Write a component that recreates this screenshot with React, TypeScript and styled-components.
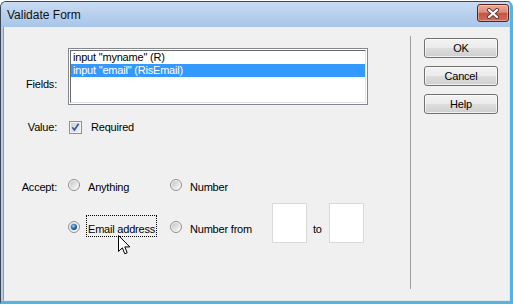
import React, { useId } from "react";
import styled, { createGlobalStyle } from "styled-components";

const GlobalStyle = createGlobalStyle`
  html, body { margin: 0; padding: 0; background: #ffffff; }
  body {
    font-family: "Liberation Sans", Arial, sans-serif;
    font-size: 11px;
    color: #000;
  }
  * { box-sizing: border-box; }
`;

const Window = styled.div`
  width: 513px;
  height: 303px;
  margin-top: 1px;
  display: flex;
  flex-direction: column;
  border-top: 1px solid #3c4654;
  border-left: 1px solid #3c4654;
  border-right: 3px solid #55b3df;
  border-bottom: 3px solid #55b3df;
  border-radius: 6px 6px 0 0;
  background: #b6cce8;
  overflow: hidden;
`;

const TitleBar = styled.div`
  height: 25px;
  flex: none;
  display: flex;
  justify-content: space-between;
  align-items: flex-start;
  padding: 0 1px 0 6px;
  background: linear-gradient(#c8dbf2, #a8c5e9);
`;

const TitleText = styled.div`
  margin-top: 5px;
  font-size: 12px;
  line-height: 16px;
  color: #111;
`;

const CloseButton = styled.div`
  width: 32px;
  height: 18px;
  margin-top: 2px;
  border: 1px solid #5a2219;
  border-radius: 3px;
  background: linear-gradient(#eaa899 0%, #de8b7a 45%, #c9533f 52%, #cf6c59 100%);
  box-shadow: inset 0 0 0 1px rgba(255, 255, 255, 0.35);
  display: flex;
  align-items: center;
  justify-content: center;
`;

const Panel = styled.div`
  flex: 1;
  display: flex;
  margin-left: 2px;
  background: #f0f0f0;
  border-left: 1px solid #8a99ab;
  border-right: 1px solid #dfe7ef;
  border-bottom: 1px solid #dfe7ef;
  letter-spacing: -0.2px;
`;

const LeftPane = styled.div`
  width: 406px;
  flex: none;
  padding-top: 21px;
  display: flex;
  flex-direction: column;
`;

const Separator = styled.div`
  width: 1px;
  flex: none;
  margin: 9px 0 11px;
  background: #a0a0a0;
`;

const RightPane = styled.div`
  flex: 1;
  padding: 11px 0 0 13px;
  display: flex;
  flex-direction: column;
  gap: 8px;
`;

const Button = styled.button`
  width: 74px;
  height: 20px;
  padding: 0;
  font-family: inherit;
  font-size: 11px;
  letter-spacing: -0.2px;
  line-height: 18px;
  color: #000;
  border: 1px solid #707070;
  border-radius: 3px;
  background: linear-gradient(#f2f2f2 0%, #ebebeb 50%, #dddddd 50%, #cfcfcf 100%);
  box-shadow: inset 0 0 0 1px rgba(255, 255, 255, 0.7);
`;

const FormRow = styled.div<{ $mt: number }>`
  display: grid;
  grid-template-columns: 53px 1fr;
  column-gap: 11px;
  align-items: start;
  margin-top: ${(p) => p.$mt}px;
`;

const FieldLabel = styled.div<{ $mt: number }>`
  text-align: right;
  line-height: 13px;
  margin-top: ${(p) => p.$mt}px;
  white-space: nowrap;
`;

const ListBox = styled.div`
  width: 300px;
  height: 57px;
  padding: 1px;
  background: #fff;
  border: 1px solid #828790;
`;

const ListInner = styled.div`
  height: 100%;
  border-top: 1px solid #696969;
  border-left: 1px solid #696969;
  border-right: 1px solid #e3e3e3;
  border-bottom: 1px solid #e3e3e3;
`;

const ListItem = styled.div<{ $selected?: boolean }>`
  height: 13px;
  line-height: 13px;
  padding-left: 2px;
  white-space: nowrap;
  background: ${(p) => (p.$selected ? "#3399ff" : "transparent")};
  color: ${(p) => (p.$selected ? "#ffffff" : "#000000")};
`;

const CheckRow = styled.div`
  display: flex;
  align-items: flex-start;
  gap: 9px;
  padding-left: 1px;
  line-height: 13px;
`;

const OptionsGrid = styled.div`
  display: grid;
  grid-template-columns: 102px auto;
  row-gap: 8px;
  align-items: end;
`;

const Option = styled.div`
  display: flex;
  align-items: flex-end;
`;

const RadioBox = styled.svg`
  flex: none;
  margin-bottom: 4px;
`;

const OptionLabel = styled.div<{ $focused?: boolean }>`
  position: relative;
  margin-left: 6px;
  padding: 7px 1px 0;
  line-height: 13px;
  white-space: nowrap;
  border: 1px dotted ${(p) => (p.$focused ? "#000" : "transparent")};
`;

const InlineText = styled.div<{ $ml: number }>`
  margin-left: ${(p) => p.$ml}px;
  margin-bottom: 1px;
  line-height: 13px;
`;

const TextBox = styled.div<{ $ml: number }>`
  width: 35px;
  height: 40px;
  flex: none;
  margin-left: ${(p) => p.$ml}px;
  margin-bottom: -6px;
  background: #fff;
  border: 1px solid #d9d9d9;
`;

const Cursor = styled.svg`
  position: absolute;
  left: 31px;
  top: 19px;
  pointer-events: none;
`;

function Radio({ checked }: { checked?: boolean }) {
  const id = useId().replace(/:/g, "");
  return (
    <RadioBox width="12" height="12" viewBox="0 0 12 12">
      <defs>
        <linearGradient id={`rg${id}`} x1="0" y1="0" x2="1" y2="1">
          <stop offset="0" stopColor="#c4c4c4" />
          <stop offset="1" stopColor="#fbfbfb" />
        </linearGradient>
        <radialGradient id={`rd${id}`} cx="0.4" cy="0.35" r="0.7">
          <stop offset="0" stopColor="#a6e0fb" />
          <stop offset="0.45" stopColor="#2a7fc6" />
          <stop offset="1" stopColor="#0b3a6e" />
        </radialGradient>
      </defs>
      <circle cx="6" cy="6" r="5.5" fill="#f4f4f4" stroke="#8e8f8f" />
      <circle cx="6" cy="6" r="4" fill={`url(#rg${id})`} />
      {checked && <circle cx="6" cy="6" r="3" fill={`url(#rd${id})`} />}
    </RadioBox>
  );
}

function Checkbox() {
  const id = useId().replace(/:/g, "");
  return (
    <svg width="13" height="13" viewBox="0 0 13 13" style={{ flex: "none" }}>
      <defs>
        <linearGradient id={`cg${id}`} x1="0" y1="0" x2="1" y2="1">
          <stop offset="0" stopColor="#c9d2df" />
          <stop offset="1" stopColor="#eef1f5" />
        </linearGradient>
      </defs>
      <rect x="0.5" y="0.5" width="12" height="12" fill="#f4f4f4" stroke="#8e8f8f" />
      <rect x="2" y="2" width="9" height="9" fill={`url(#cg${id})`} />
      <path d="M3.3 6.3 L5.4 9 L9.6 2.8" fill="none" stroke="#3f5a94" strokeWidth="1.7" />
    </svg>
  );
}

export default function App() {
  return (
    <>
      <GlobalStyle />
      <Window>
        <TitleBar>
          <TitleText>Validate Form</TitleText>
          <CloseButton>
            <svg width="14" height="11" viewBox="0 0 14 11">
              <path d="M3 2 L11 9 M11 2 L3 9" stroke="#5b3a36" strokeWidth="4" strokeLinecap="round" />
              <path d="M3 2 L11 9 M11 2 L3 9" stroke="#ffffff" strokeWidth="2.2" strokeLinecap="round" />
            </svg>
          </CloseButton>
        </TitleBar>
        <Panel>
          <LeftPane>
            <FormRow $mt={0}>
              <FieldLabel $mt={30}>Fields:</FieldLabel>
              <ListBox>
                <ListInner>
                  <ListItem>input "myname" (R)</ListItem>
                  <ListItem $selected>input "email" (RisEmail)</ListItem>
                </ListInner>
              </ListBox>
            </FormRow>
            <FormRow $mt={16}>
              <FieldLabel $mt={0}>Value:</FieldLabel>
              <CheckRow>
                <Checkbox />
                <span>Required</span>
              </CheckRow>
            </FormRow>
            <FormRow $mt={39}>
              <FieldLabel $mt={8}>Accept:</FieldLabel>
              <OptionsGrid>
                <Option>
                  <Radio />
                  <OptionLabel>Anything</OptionLabel>
                </Option>
                <Option>
                  <Radio />
                  <OptionLabel>Number</OptionLabel>
                </Option>
                <Option>
                  <Radio checked />
                  <OptionLabel $focused>
                    Email address
                    <Cursor width="13" height="21" viewBox="0 0 13 21">
                      <path
                        d="M0.5 0.5 L0.5 16.5 L4.3 12.8 L6.8 18.8 L9.2 17.8 L6.8 11.9 L11.8 11.9 Z"
                        fill="#ffffff"
                        stroke="#000000"
                        strokeWidth="1"
                        strokeLinejoin="miter"
                      />
                    </Cursor>
                  </OptionLabel>
                </Option>
                <Option>
                  <Radio />
                  <OptionLabel>Number from</OptionLabel>
                  <TextBox $ml={18} />
                  <InlineText $ml={6}>to</InlineText>
                  <TextBox $ml={7} />
                </Option>
              </OptionsGrid>
            </FormRow>
          </LeftPane>
          <Separator />
          <RightPane>
            <Button>OK</Button>
            <Button>Cancel</Button>
            <Button>Help</Button>
          </RightPane>
        </Panel>
      </Window>
    </>
  );
}
